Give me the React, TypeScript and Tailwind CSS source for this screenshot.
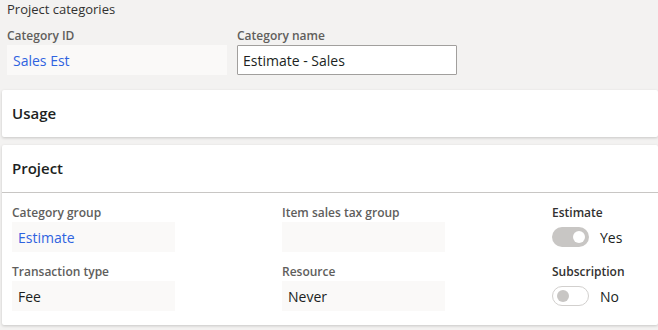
import React from "react";

const FONT = { fontFamily: '"Segoe UI", "Open Sans", "Liberation Sans", sans-serif' };

function Field({ label, value, blue }: { label: string; value: string; blue?: boolean }) {
  return (
    <div className="flex flex-col">
      <div className="text-[12px] leading-[18px] font-semibold text-[#605e5c]">{label}</div>
      <div className="h-[30px] w-[163px] bg-[#faf9f8] flex items-center px-[6px] text-[14px]">
        <span className={blue ? "text-[#2f63e0]" : "text-[#201f1e]"}>{value}</span>
      </div>
    </div>
  );
}

function Toggle({ label, on }: { label: string; on: boolean }) {
  return (
    <div className="flex flex-col">
      <div className="text-[12px] leading-[18px] font-semibold text-[#323130]">{label}</div>
      <div className="h-[30px] flex items-center gap-[11px]">
        {on ? (
          <div className="w-[37px] h-[20px] rounded-full bg-[#c8c6c4] flex items-center justify-end pr-[4px]">
            <div className="w-[12px] h-[12px] rounded-full bg-white" />
          </div>
        ) : (
          <div className="w-[37px] h-[20px] rounded-full border border-[#d2d0ce] bg-white flex items-center pl-[4px]">
            <div className="w-[12px] h-[12px] rounded-full bg-[#c8c6c4]" />
          </div>
        )}
        <span className="text-[14px] text-[#201f1e]">{on ? "Yes" : "No"}</span>
      </div>
    </div>
  );
}

export default function App() {
  return (
    <div className="w-[658px] h-[330px] bg-[#f3f2f1] overflow-hidden" style={FONT}>
      <div className="pl-[7px] pt-[1px] text-[13px] leading-[16px] text-[#323130]">Project categories</div>

      {/* header fields */}
      <div className="flex gap-[10px] pl-[7px] mt-[10px]">
        <div className="flex flex-col">
          <div className="text-[12px] leading-[18px] font-semibold text-[#605e5c]">Category ID</div>
          <div className="h-[30px] w-[220px] bg-[#faf9f8] flex items-center px-[6px] text-[14px] text-[#2f63e0]">
            Sales Est
          </div>
        </div>
        <div className="flex flex-col">
          <div className="text-[12px] leading-[18px] font-semibold text-[#605e5c]">Category name</div>
          <div className="h-[30px] w-[220px] bg-white border border-[#a19f9d] rounded-[1px] flex items-center px-[5px] text-[14px] text-[#201f1e]">
            Estimate - Sales
          </div>
        </div>
      </div>

      {/* Usage */}
      <div className="ml-[2px] mt-[15px] h-[47px] bg-white rounded-[2px] shadow-[0_1px_3px_rgba(0,0,0,0.18)] flex items-center px-[10px]">
        <span className="text-[15px] font-semibold text-[#201f1e]">Usage</span>
      </div>

      {/* Project */}
      <div className="ml-[2px] mt-[8px] h-[180px] bg-white rounded-[2px] shadow-[0_1px_3px_rgba(0,0,0,0.18)]">
        <div className="h-[48px] flex items-center px-[10px] border-b border-[#c8c6c4]">
          <span className="text-[15px] font-semibold text-[#201f1e]">Project</span>
        </div>
        <div className="flex pl-[10px] pt-[11px]">
          <div className="flex flex-col gap-[11px] w-[270px]">
            <Field label="Category group" value="Estimate" blue />
            <Field label="Transaction type" value="Fee" />
          </div>
          <div className="flex flex-col gap-[11px] w-[270px]">
            <Field label="Item sales tax group" value="" />
            <Field label="Resource" value="Never" />
          </div>
          <div className="flex flex-col gap-[11px]">
            <Toggle label="Estimate" on />
            <Toggle label="Subscription" on={false} />
          </div>
        </div>
      </div>
    </div>
  );
}
